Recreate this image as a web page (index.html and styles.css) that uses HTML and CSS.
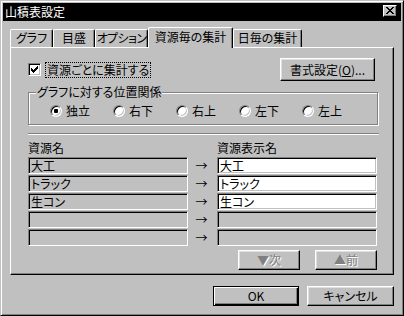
FILE: index.html
```html
<!DOCTYPE html>
<html lang="ja">
<head>
<meta charset="utf-8">
<title>山積表設定</title>
<link rel="stylesheet" href="styles.css">
</head>
<body>
<div class="window">
  <div class="titlebar">
    <span class="title">山積表設定</span>
    <span class="close"><svg width="8" height="7" viewBox="0 0 8 7"><path d="M0 0h2v1h-2zM6 0h2v1h-2zM1 1h2v1h-2zM5 1h2v1h-2zM2 2h4v1h-4zM3 3h2v1h-2zM2 4h4v1h-4zM1 5h2v1h-2zM5 5h2v1h-2zM0 6h2v1h-2zM6 6h2v1h-2z" fill="#000"/></svg></span>
  </div>
  <div class="tabs">
    <div class="tab t1">グラフ</div>
    <div class="tab t2">目盛</div>
    <div class="tab t3">オプション</div>
    <div class="tab active">資源毎の集計</div>
    <div class="tab t5">日毎の集計</div>
  </div>
  <div class="panel">
    <div class="top-row">
      <div class="check">
        <span class="checkbox"><svg width="7" height="7" viewBox="0 0 7 7"><path d="M6 0h1v1h-1zM5 1h2v1h-2zM0 2h1v1h-1zM4 2h3v1h-3zM0 3h2v1h-2zM3 3h3v1h-3zM0 4h5v1h-5zM1 5h3v1h-3zM2 6h1v1h-1z" fill="#000"/></svg></span>
        <span class="check-label">資源ごとに集計する</span>
      </div>
      <div class="btn format">書式設定(<u>O</u>)...</div>
    </div>
    <div class="group">
      <div class="group-label">グラフに対する位置関係</div>
      <div class="radios">
        <div class="radio-item"><span class="radio checked"></span><span>独立</span></div>
        <div class="radio-item"><span class="radio"></span><span>右下</span></div>
        <div class="radio-item"><span class="radio"></span><span>右上</span></div>
        <div class="radio-item"><span class="radio"></span><span>左下</span></div>
        <div class="radio-item"><span class="radio"></span><span>左上</span></div>
      </div>
    </div>
    <div class="sep"></div>
    <div class="heads">
      <div>資源名</div><div></div><div>資源表示名</div>
    </div>
    <div class="grid">
      <div class="field">大工</div><div class="arrow">→</div><div class="field white">大工</div>
      <div class="field">トラック</div><div class="arrow">→</div><div class="field white">トラック</div>
      <div class="field">生コン</div><div class="arrow">→</div><div class="field white">生コン</div>
      <div class="field"></div><div class="arrow">→</div><div class="field"></div>
      <div class="field"></div><div class="arrow">→</div><div class="field"></div>
    </div>
    <div class="nav">
      <div class="btn disabled navbtn">▼次</div>
      <div class="btn disabled navbtn">▲前</div>
    </div>
  </div>
  <div class="footer">
    <div class="btn default ok">OK</div>
    <div class="btn cancel">キャンセル</div>
  </div>
</div>
</body>
</html>
```

FILE: styles.css
```css
html, body {
  margin: 0;
  padding: 0;
  background: #c0c0c0;
}

body {
  font-family: "Noto Sans CJK JP", "Noto Sans", sans-serif;
  font-size: 12px;
  font-feature-settings: "palt" 1;
  color: #000;
}

.window {
  box-sizing: border-box;
  width: 404px;
  height: 316px;
  background: #c0c0c0;
  border: 1px solid;
  border-color: #c0c0c0 #000 #000 #c0c0c0;
  box-shadow: inset 1px 1px #fff, inset -1px -1px #808080;
  padding: 2px;
}

.titlebar {
  height: 18px;
  background: #000;
  color: #fff;
  display: flex;
  justify-content: space-between;
  align-items: flex-start;
}

.title {
  line-height: 18px;
  padding-left: 2px;
}

.close {
  box-sizing: border-box;
  width: 14px;
  height: 12px;
  margin-top: 2px;
  margin-right: 4px;
  background: #c0c0c0;
  border: 1px solid;
  border-color: #fff #000 #000 #fff;
  box-shadow: inset -1px -1px #808080;
  display: flex;
  align-items: center;
  justify-content: center;
}

.close svg {
  display: block;
  margin-left: -1px;
  margin-top: -1px;
}

.tabs {
  display: flex;
  align-items: flex-end;
  height: 20px;
  margin-top: 6px;
  padding-left: 7px;
}

.tab {
  box-sizing: border-box;
  height: 18px;
  border-top: 1px solid #fff;
  border-left: 1px solid #fff;
  border-right: 1px solid #000;
  border-radius: 2px 2px 0 0;
  box-shadow: inset -1px 0 #808080;
  background: #c0c0c0;
  display: flex;
  justify-content: center;
  align-items: center;
  line-height: 14px;
  padding-bottom: 1px;
  white-space: nowrap;
}

.t1 { width: 43px; }
.t2 { width: 42px; }
.t3 { width: 53px; letter-spacing: -0.6px; }
.t5 { width: 69px; }

.tab.active {
  width: 85px;
  height: 21px;
  margin-bottom: -1px;
  padding-bottom: 3px;
  position: relative;
  z-index: 1;
}

.panel {
  box-sizing: border-box;
  width: 384px;
  margin-left: 7px;
  border: 1px solid;
  border-color: #fff #000 #000 #fff;
  box-shadow: inset -1px -1px #808080;
  padding: 10px 15px 4px 17px;
}

.top-row {
  display: flex;
  justify-content: space-between;
  align-items: center;
  height: 23px;
}

.check {
  display: flex;
  align-items: center;
  gap: 4px;
}

.checkbox {
  box-sizing: border-box;
  width: 13px;
  height: 13px;
  background: #fff;
  border: 1px solid;
  border-color: #808080 #fff #fff #808080;
  box-shadow: inset 1px 1px #000, inset -1px -1px #c0c0c0;
  display: flex;
  align-items: center;
  justify-content: center;
}

.checkbox svg {
  display: block;
}

.check-label {
  border: 1px dotted #000;
  padding: 0 1px;
  line-height: 14px;
  white-space: nowrap;
}

.btn {
  box-sizing: border-box;
  background: #c0c0c0;
  border: 1px solid;
  border-color: #fff #000 #000 #fff;
  box-shadow: inset -1px -1px #808080, inset 1px 1px #dfdfdf;
  display: flex;
  align-items: center;
  justify-content: center;
  white-space: nowrap;
  line-height: 14px;
}

.btn u {
  text-underline-offset: 1px;
}

.format {
  width: 95px;
  height: 23px;
  margin-right: 3px;
}

.group {
  margin-top: 11px;
  width: 350px;
  box-sizing: border-box;
  border: 1px solid #808080;
  box-shadow: inset 1px 1px #fff, 1px 1px #fff;
  padding-bottom: 7px;
}

.group-label {
  width: fit-content;
  margin: -7px 0 0 7px;
  padding: 0 1px;
  line-height: 12px;
  background: #c0c0c0;
  white-space: nowrap;
}

.radios {
  display: flex;
  margin-top: 7px;
  padding-left: 21px;
  height: 12px;
}

.radio-item {
  width: 63px;
  display: flex;
  align-items: center;
  gap: 4px;
  line-height: 12px;
}

.radio {
  box-sizing: border-box;
  width: 12px;
  height: 12px;
  flex: none;
  border-radius: 50%;
  background: #fff;
  border: 1px solid;
  border-color: #808080 #fff #fff #808080;
  box-shadow: inset 1px 1px #000, inset -1px -1px #c0c0c0;
}

.radio.checked {
  background: radial-gradient(circle at 50% 50%, #000 0, #000 2px, #fff 2.5px);
}

.sep {
  margin-top: 8px;
  width: 351px;
  height: 1px;
  border-top: 1px solid #808080;
  background: #fff;
}

.heads {
  display: grid;
  grid-template-columns: 160px 29px 160px;
  margin-top: 6px;
  line-height: 14px;
}

.grid {
  display: grid;
  grid-template-columns: 160px 29px 160px;
  grid-auto-rows: 17px;
  row-gap: 1px;
  margin-top: 2px;
}

.field {
  box-sizing: border-box;
  height: 17px;
  background: #c0c0c0;
  border: 1px solid;
  border-color: #808080 #fff #fff #808080;
  box-shadow: inset 1px 1px #000, inset -1px -1px #c0c0c0;
  padding-left: 2px;
  line-height: 15px;
  white-space: nowrap;
  overflow: hidden;
}

.field.white {
  background: #fff;
}

.arrow {
  display: flex;
  align-items: center;
  justify-content: center;
  line-height: 17px;
  padding-right: 2px;
}

.nav {
  display: flex;
  justify-content: flex-end;
  gap: 15px;
  margin-top: 4px;
  padding-right: 1px;
}

.navbtn {
  width: 62px;
  height: 20px;
}

.disabled {
  color: #808080;
  text-shadow: 1px 1px 0 #fff;
}

.footer {
  display: flex;
  justify-content: flex-end;
  gap: 8px;
  margin-top: 11px;
  padding-right: 7px;
}

.ok {
  width: 86px;
  height: 20px;
}

.cancel {
  width: 87px;
  height: 20px;
}

.btn.default {
  border: 1px solid #000;
  box-shadow: inset 1px 1px #fff, inset -1px -1px #000, inset -2px -2px #808080;
}
```
